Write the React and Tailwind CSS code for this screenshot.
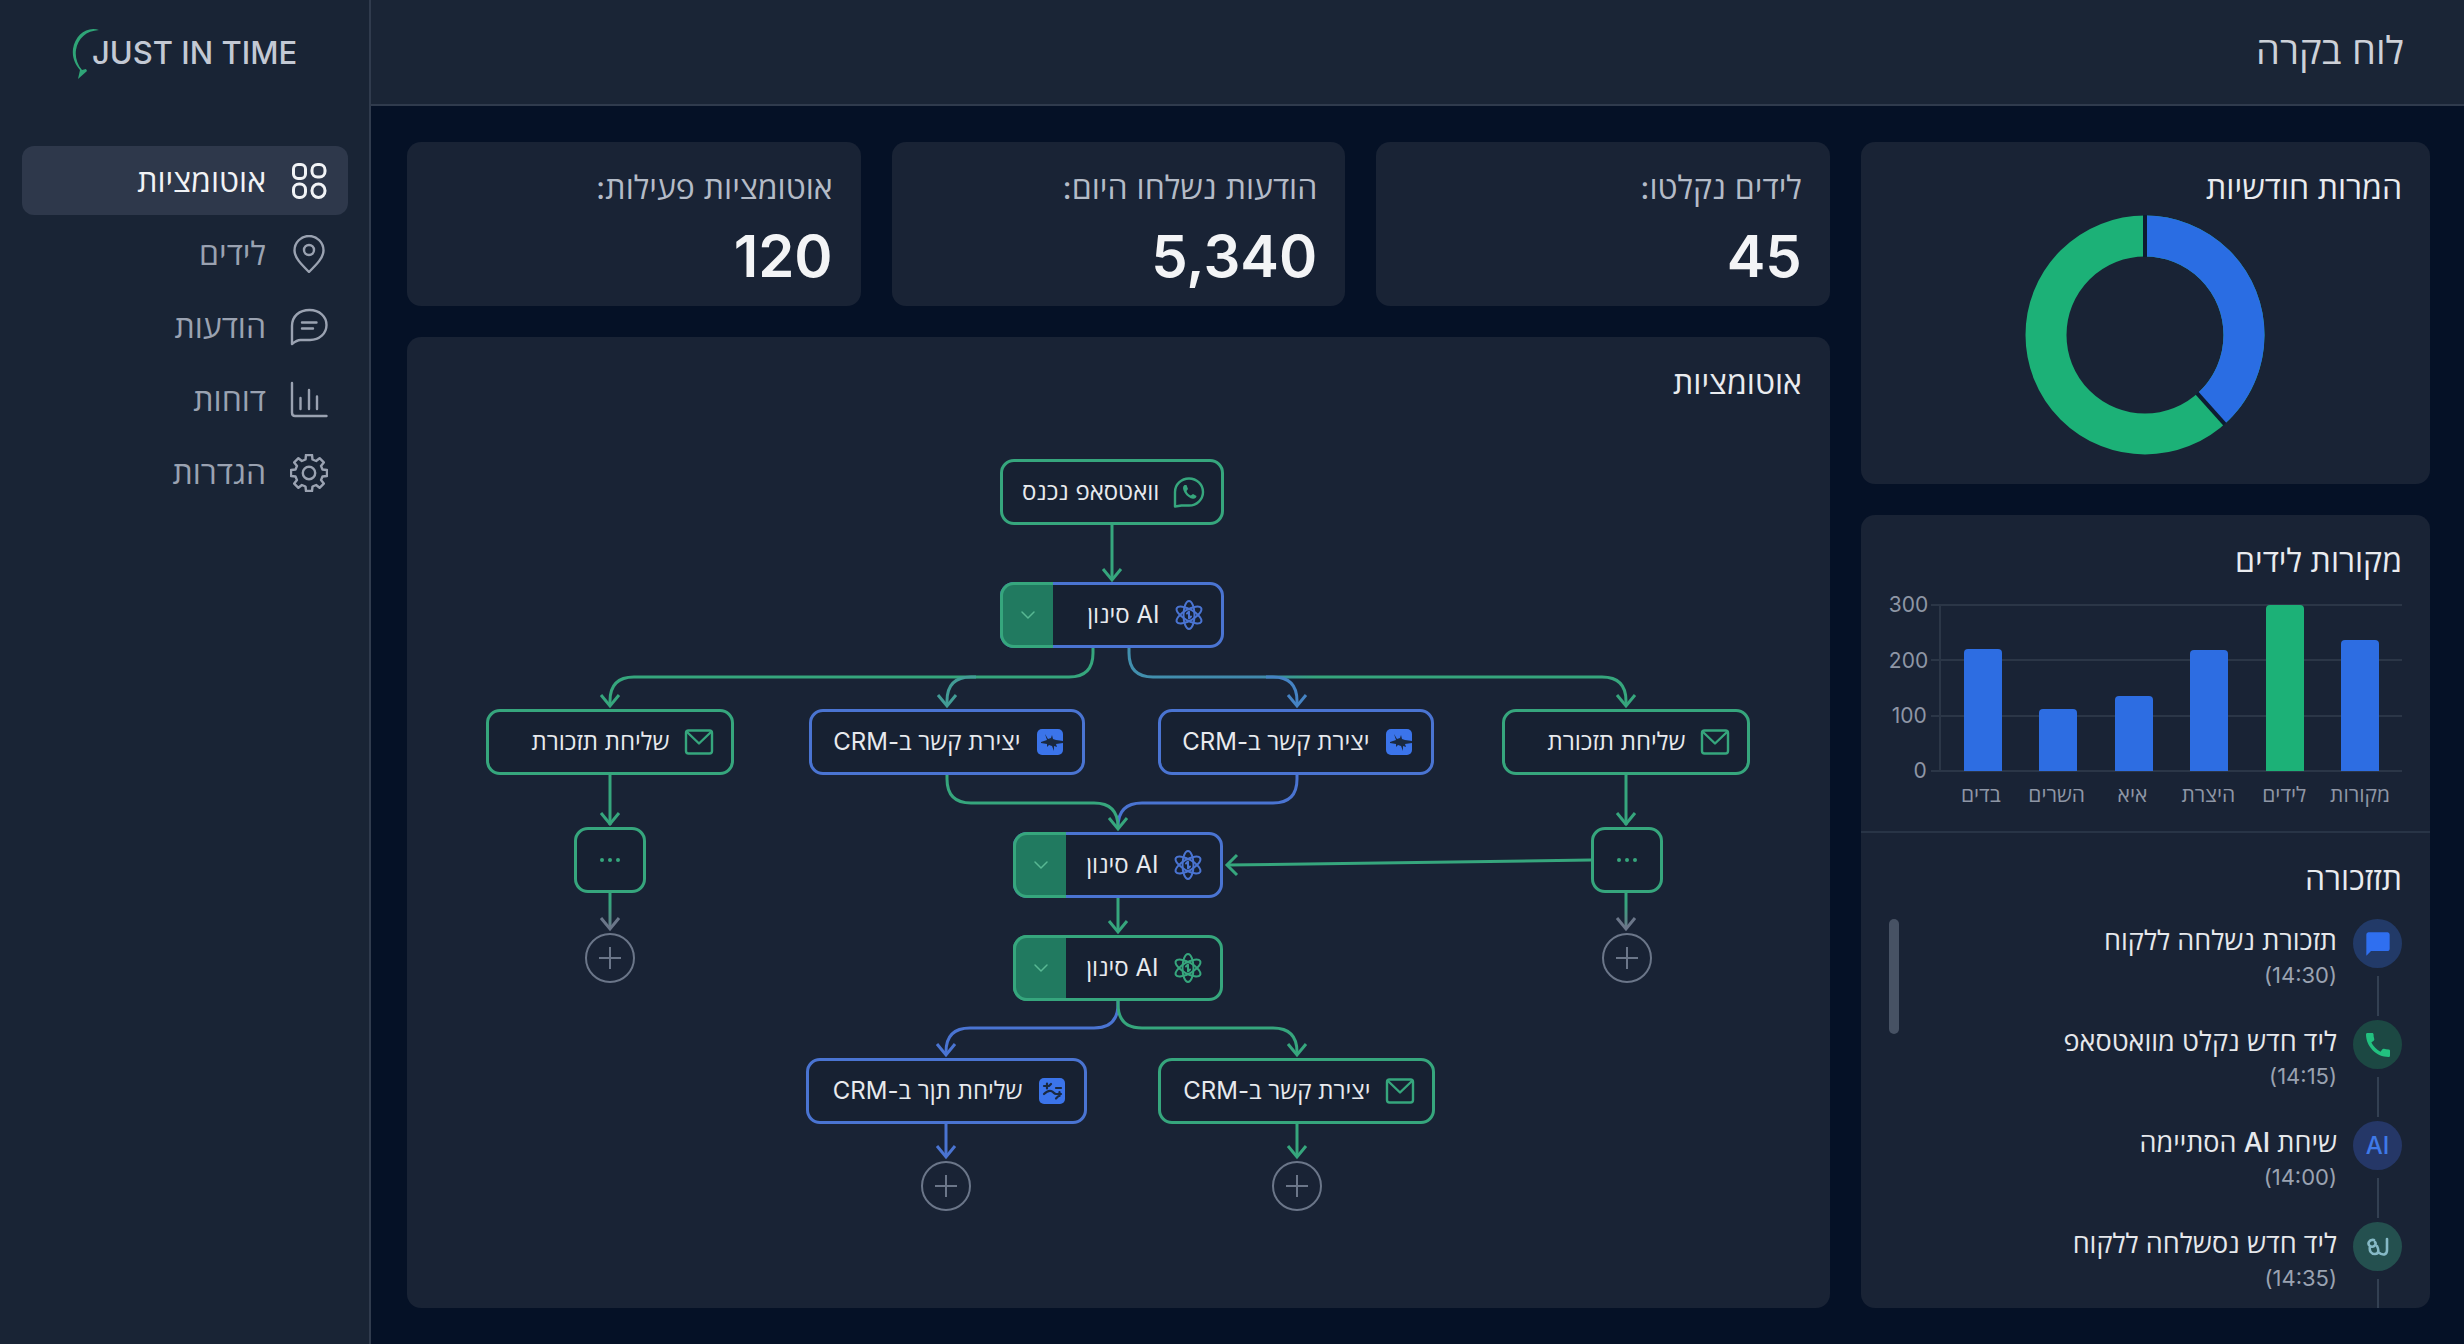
import React from "react";
import { ChevronDown } from "lucide-react";
import { MdCall, MdChatBubble } from "react-icons/md";

const GREEN = "#36a67d";
const BLUE = "#4a74d2";
const GREY = "#6b7689";

/* ---------- icons ---------- */

function GridIcon() {
  return (
    <svg viewBox="0 0 38 38" className="size-[38px]" fill="none" stroke="currentColor" strokeWidth="3">
      <rect x="3.5" y="2.5" width="12" height="14" rx="4.5" />
      <rect x="22" y="2.5" width="13" height="12.5" rx="5.5" />
      <rect x="3.5" y="22" width="12" height="13.5" rx="5.5" />
      <rect x="22" y="22" width="13" height="13.5" rx="6.5" />
    </svg>
  );
}

function PinIcon() {
  return (
    <svg viewBox="0 0 38 38" className="size-[38px]" fill="none" stroke="currentColor" strokeWidth="2.4" strokeLinejoin="round">
      <path d="M19 37C11 29 4.500 22.500 4.500 15.500a14.500 14.500 0 0 1 29 0C33.500 22.500 27 29 19 37Z" />
      <circle cx="19" cy="15" r="5" />
    </svg>
  );
}

function ChatIcon() {
  return (
    <svg viewBox="0 0 38 38" className="size-[38px]" fill="none" stroke="currentColor" strokeWidth="2.4" strokeLinecap="round" strokeLinejoin="round">
      <path d="M2 36V18C2 8 9.500 2 19.500 2S36.500 8.500 36.500 17 29.500 32 20 32H10.500C7.500 32 4.500 34 2 36Z" />
      <path d="M12 14.500h14.500M12 20.500h11" />
    </svg>
  );
}

function ReportIcon() {
  return (
    <svg viewBox="0 0 38 38" className="size-[38px]" fill="none" stroke="currentColor" strokeWidth="2.4" strokeLinecap="round" strokeLinejoin="round">
      <path d="M2 2v29.500Q2 35 5 35h31.500" />
      <path d="M10.500 17v11M19 9v19M27 15.500V28" />
    </svg>
  );
}

function GearIcon() {
  return (
    <svg viewBox="0 0 38 38" className="size-[38px]" fill="none" stroke="currentColor" strokeWidth="2.4" strokeLinejoin="round">
      <path d="M15.500 5.500 16 1h6l.500 4.500 3.600 1.500 3.500-2.800 4.200 4.200-2.800 3.500 1.500 3.600 4.500.500v6l-4.500.500-1.500 3.600 2.800 3.500-4.200 4.200-3.500-2.800-3.600 1.500-.500 4.500h-6l-.500-4.500-3.600-1.500-3.500 2.800-4.200-4.200 2.800-3.500-1.500-3.600L1 22v-6l4.500-.500L7 11.900 4.200 8.400l4.200-4.200L11.900 7Z" />
      <circle cx="19" cy="19" r="6.2" />
    </svg>
  );
}

function WhatsappIcon() {
  return (
    <svg viewBox="0 0 32 32" className="size-8" fill="none" stroke="currentColor" strokeWidth="2.4" strokeLinejoin="round">
      <path d="M2 30.500V16A14 13.500 0 1 1 16 29.500H8.500Z" />
      <path
        d="M11.500 9c-2 1.500-2 4 0 7.500s5.500 6 8.500 6.200c2 .1 3.500-1.200 3.500-2.700l-3.500-2-2.200 1.600c-2-.8-3.600-2.600-4.300-4.600l1.500-2L13.500 9Z"
        fill="currentColor"
        stroke="none"
      />
    </svg>
  );
}

function AtomIcon() {
  return (
    <svg viewBox="0 0 32 32" className="size-8" fill="none" stroke="currentColor" strokeWidth="2">
      {[0, 60, 120].map((angle) => (
        <ellipse key={angle} cx="16" cy="16" rx="5.5" ry="14" transform={`rotate(${angle} 16 16)`} />
      ))}
      <path d="M16 12.500v7M14 14.500l2-2M18 17.500l-2 2" strokeLinecap="round" />
    </svg>
  );
}

function CrmIcon() {
  return (
    <svg viewBox="0 0 32 32" className="size-8">
      <rect x="3" y="3" width="26" height="26" rx="5" fill="#3b74ea" />
      <path
        d="M11 8l3 5 3-1 1-3 1 4 3 1 7 1v2l-7 1 1 3-3-1v5l-2-5-3-1-2 2v-3l-6-1v-1l6-2Z"
        fill="#1a2940"
      />
    </svg>
  );
}

function CrmAltIcon() {
  return (
    <svg viewBox="0 0 32 32" className="size-8">
      <rect x="3" y="3" width="26" height="26" rx="5" fill="#3b74ea" />
      <g fill="none" stroke="#1a2940" strokeWidth="2.2" strokeLinecap="round" strokeLinejoin="round">
        <path d="M8 11h5l2-2M11 8.500v5M8 19c2-2 4-4 7-3s3 3 5 3h5" />
        <path d="M20 13h5M22 21.500l-2 2M23.500 17v4" />
      </g>
    </svg>
  );
}

function MailIcon() {
  return (
    <svg viewBox="0 0 32 32" className="size-8" fill="none" stroke="currentColor" strokeWidth="2.4" strokeLinejoin="round">
      <rect x="3" y="4.500" width="26" height="23" rx="2.500" />
      <path d="m4 6 12 11.500L28 6" />
    </svg>
  );
}

function SquiggleIcon() {
  return (
    <svg viewBox="0 0 24 24" className="size-6" fill="none" stroke="currentColor" strokeWidth="2.6" strokeLinecap="round">
      <path d="M8 5C3 4 1 9 4 11s7-1 5-4M4 11c-1 5 1 8 5 8s4-4 2-8M12 17c5 4 9 3 9-2V4" />
    </svg>
  );
}

/* ---------- data ---------- */

const navItems = [
  { label: "אוטומציות", icon: GridIcon, active: true },
  { label: "לידים", icon: PinIcon },
  { label: "הודעות", icon: ChatIcon },
  { label: "דוחות", icon: ReportIcon },
  { label: "הגדרות", icon: GearIcon },
];

const stats = [
  { label: "לידים נקלטו:", value: "45" },
  { label: "הודעות נשלחו היום:", value: "5,340" },
  { label: "אוטומציות פעילות:", value: "120" },
];

const sources = [
  { label: "בדים", value: 220 },
  { label: "השרים", value: 112 },
  { label: "איא", value: 136 },
  { label: "היצרת", value: 219 },
  { label: "לידים", value: 300, highlight: true },
  { label: "מקורות", value: 236 },
];

const activity = [
  { text: "תזכורת נשלחה ללקוח", time: "(14:30)", icon: <MdChatBubble className="size-7" />, tone: "bg-[#223a68] text-[#2f6ff0]" },
  { text: "ליד חדש נקלט מוואטסאפ", time: "(14:15)", icon: <MdCall className="size-8" />, tone: "bg-[#1c4843] text-[#22c07f]" },
  { text: "שיחת AI הסתיימה", time: "(14:00)", icon: "AI", tone: "bg-[#253767] text-[#3f7ae8]" },
  { text: "ליד חדש נסשלחה ללקוח", time: "(14:35)", icon: <SquiggleIcon />, tone: "bg-[#24504f] text-[#86b9c6]" },
];

const nodes = [
  { text: "וואטסאפ נכנס", icon: <WhatsappIcon />, tone: "green", place: "left-[514px] top-0 w-[224px]" },
  { text: "AI סינון", icon: <AtomIcon />, tone: "blue", toggle: true, place: "left-[514px] top-[123px] w-[224px]" },
  { text: "שליחת תזכורת", icon: <MailIcon />, tone: "green", place: "left-0 top-[250px] w-[248px]" },
  { text: "יצירת קשר ב-CRM", icon: <CrmIcon />, tone: "blue", place: "left-[323px] top-[250px] w-[276px]" },
  { text: "יצירת קשר ב-CRM", icon: <CrmIcon />, tone: "blue", place: "left-[672px] top-[250px] w-[276px]" },
  { text: "שליחת תזכורת", icon: <MailIcon />, tone: "green", place: "left-[1016px] top-[250px] w-[248px]" },
  { text: "AI סינון", icon: <AtomIcon />, tone: "blue", toggle: true, place: "left-[527px] top-[373px] w-[210px]" },
  { text: "AI סינון", icon: <AtomIcon />, tone: "green", toggle: true, place: "left-[527px] top-[476px] w-[210px]" },
  { text: "שליחת תןר ב-CRM", icon: <CrmAltIcon />, tone: "blue", place: "left-[320px] top-[599px] w-[281px]" },
  { text: "יצירת קשר ב-CRM", icon: <MailIcon />, tone: "green", place: "left-[672px] top-[599px] w-[277px]" },
];

const moreButtons = ["left-[88px] top-[368px]", "left-[1105px] top-[368px]"];

const plusButtons = [
  "left-[99px] top-[474px]",
  "left-[1116px] top-[474px]",
  "left-[435px] top-[702px]",
  "left-[786px] top-[702px]",
];

const edges = [
  { d: "M626 66V120", color: GREEN },
  { d: "M607 189V194Q607 218 583 218H148Q124 218 124 242V247", color: GREEN },
  { d: "M490 218H485Q461 218 461 242V247", color: "#429c96" },
  { d: "M643 189V194Q643 218 667 218H1116Q1140 218 1140 242V247", color: "url(#split)" },
  { d: "M780 218H787Q811 218 811 242V247", color: "#4583c4" },
  { d: "M124 316V366", color: GREEN },
  { d: "M1140 316V366", color: GREEN },
  { d: "M124 434V470", color: "url(#fade)" },
  { d: "M1140 434V470", color: "url(#fade)" },
  { d: "M811 316V320Q811 344 787 344H656Q632 344 632 368V370", color: BLUE },
  { d: "M461 316V320Q461 344 485 344H608Q632 344 632 368V370", color: GREEN },
  { d: "M1105 401L741 406", color: GREEN },
  { d: "M632 439V473", color: GREEN },
  { d: "M632 542V545Q632 569 608 569H484Q460 569 460 593V596", color: BLUE },
  { d: "M632 542V545Q632 569 656 569H787Q811 569 811 593V596", color: GREEN },
  { d: "M460 665V698", color: BLUE },
  { d: "M811 665V698", color: GREEN },
];

// tips of the arrow heads that point down
const arrowTips = [
  [626, 121, GREEN],
  [124, 247, GREEN],
  [461, 247, "#429c96"],
  [811, 247, "#4583c4"],
  [1140, 247, GREEN],
  [124, 365, GREEN],
  [1140, 365, GREEN],
  [124, 470, GREY],
  [1140, 470, GREY],
  [632, 370, GREEN],
  [632, 473, GREEN],
  [460, 596, BLUE],
  [811, 596, GREEN],
  [460, 698, BLUE],
  [811, 698, GREEN],
];

/* ---------- parts ---------- */

function Sidebar() {
  return (
    <aside className="w-[371px] shrink-0 border-r-2 border-[#303b4d] bg-[#192435]">
      <div className="flex h-[106px] items-center pl-[72px]">
        <svg viewBox="0 0 28 52" className="-mr-2 h-[52px] w-7" fill="#2fa577">
          <path d="M27 3C15 -1 3 8 1 22c-1 9 2 15 7 21l-2 9 9-8-1-2-4 1C5 37 3 30 4 23 6 11 14 4 27 3Z" />
        </svg>
        <span className="text-[31px] font-medium text-[#c3c9d4]">JUST IN TIME</span>
      </div>
      <nav dir="rtl" className="mt-10 flex flex-col gap-1 pr-[21px] pl-[22px]">
        {navItems.map(({ label, icon: Icon, active }) => (
          <a
            key={label}
            href="#"
            className={`flex h-[69px] items-center gap-6 rounded-xl px-5 text-[32px] ${
              active ? "bg-[#2e384b] text-[#f1f3f6]" : "text-[#9aa2b1]"
            }`}
          >
            <Icon />
            {label}
          </a>
        ))}
      </nav>
    </aside>
  );
}

function StatCard({ label, value }) {
  return (
    <div className="h-[164px] rounded-[14px] bg-[#192335] px-7 pt-[22px]">
      <p className="text-[32px] leading-12 text-[#b4bbc7]">{label}</p>
      <p className="pt-2 text-[58px] leading-[72px] font-semibold text-[#f3f4f6]">{value}</p>
    </div>
  );
}

function FlowNode({ text, icon, tone, toggle, place }) {
  const green = tone === "green";
  return (
    <div
      className={`absolute flex h-[66px] items-center gap-[14px] rounded-[14px] border-3 bg-[#172132] pr-4 text-2xl text-[#e8eaee] ${place} ${
        green ? "border-[#36a67d]" : "border-[#4a74d2]"
      }`}
    >
      <span className={green ? "text-[#36a67d]" : "text-[#4a74d2]"}>{icon}</span>
      <span className="whitespace-nowrap">{text}</span>
      {toggle && (
        <button
          type="button"
          aria-label="פתח"
          className="absolute -inset-y-[3px] -left-[3px] flex w-[53px] items-center justify-center rounded-l-[14px] border-3 border-r-0 border-[#36a67d] bg-[#217a60] text-[#58b893]"
        >
          <ChevronDown className="size-6" strokeWidth={1.5} />
        </button>
      )}
    </div>
  );
}

function FlowCanvas() {
  return (
    <div className="relative mx-auto h-[752px] w-[1264px]">
      <svg viewBox="0 0 1264 752" className="absolute inset-0 size-full" fill="none" strokeWidth="3">
        <defs>
          <linearGradient id="split" gradientUnits="userSpaceOnUse" x1="643" y1="0" x2="830" y2="0">
            <stop offset="0" stopColor="#4290ae" />
            <stop offset="0.7" stopColor="#4188ac" />
            <stop offset="1" stopColor={GREEN} />
          </linearGradient>
          <linearGradient id="fade" gradientUnits="userSpaceOnUse" x1="0" y1="434" x2="0" y2="470">
            <stop offset="0.3" stopColor={GREEN} />
            <stop offset="1" stopColor={GREY} />
          </linearGradient>
        </defs>
        {edges.map(({ d, color }) => (
          <path key={d + color} d={d} stroke={color} />
        ))}
        {arrowTips.map(([x, y, color]) => (
          <path key={`${x}-${y}`} d={`M${x - 9} ${y - 11}L${x} ${y}L${x + 9} ${y - 11}`} stroke={color} />
        ))}
        <path d="M751 396L741 406L751 416" stroke={GREEN} />
      </svg>

      {nodes.map((node) => (
        <FlowNode key={node.place} {...node} />
      ))}

      {moreButtons.map((place) => (
        <button
          key={place}
          type="button"
          aria-label="עוד"
          className={`absolute flex h-[66px] w-[72px] items-center justify-center gap-1 rounded-[14px] border-3 border-[#36a67d] bg-[#172132] ${place}`}
        >
          <span className="size-1 rounded-full bg-[#36a67d]" />
          <span className="size-1 rounded-full bg-[#36a67d]" />
          <span className="size-1 rounded-full bg-[#36a67d]" />
        </button>
      ))}

      {plusButtons.map((place) => (
        <button
          key={place}
          type="button"
          aria-label="הוסף"
          className={`absolute flex size-[50px] items-center justify-center rounded-full border-2 border-[#6b7689] text-[#6b7689] ${place}`}
        >
          <svg viewBox="0 0 22 22" className="size-[22px]" stroke="currentColor" strokeWidth="2">
            <path d="M11 0v22M0 11h22" />
          </svg>
        </button>
      ))}
    </div>
  );
}

function Donut() {
  const r = 99;
  const length = 2 * Math.PI * r;
  const blue = length * 0.384;
  return (
    <svg viewBox="0 0 240 240" className="mx-auto size-60" fill="none">
      <g transform="rotate(-90 120 120)" strokeWidth="41">
        <circle cx="120" cy="120" r={r} stroke="#1cb177" />
        <circle cx="120" cy="120" r={r} stroke="#2a6de3" strokeDasharray={`${blue} ${length}`} />
      </g>
      <g stroke="#0d1c31" strokeWidth="4">
        <path d="M120 0V42" />
        <path d="M120 0V42" transform="rotate(138.2 120 120)" />
      </g>
    </svg>
  );
}

function SourcesChart() {
  return (
    <div dir="ltr" className="px-7">
      <div className="relative flex h-[190px] flex-col justify-between">
        {[300, 200, 100, 0].map((tick) => (
          <div key={tick} className="flex h-6 items-center gap-1">
            <span className="w-[38px] text-right text-[21px] text-[#8e96a5]">{tick}</span>
            <span className="h-[2px] flex-1 bg-[#2b3647]" />
          </div>
        ))}
        <div className="absolute inset-y-3 right-0 left-[50px] flex items-end justify-around border-l-2 border-[#2b3647] px-1">
          {sources.map(({ label, value, highlight }) => (
            <div
              key={label}
              className={`w-[38px] rounded-t-[4px] ${highlight ? "bg-[#1cb177]" : "bg-[#2d6de2]"}`}
              style={{ height: `${value / 3}%` }}
            />
          ))}
        </div>
      </div>
      <div className="ml-[50px] grid grid-cols-6 px-1 text-center text-[21px] leading-6 text-[#8e96a5]">
        {sources.map(({ label }) => (
          <span key={label}>{label}</span>
        ))}
      </div>
    </div>
  );
}

function ActivityList() {
  return (
    <div className="flex flex-1 items-start justify-between px-7">
      <ul className="flex flex-col self-stretch">
        {activity.map(({ text, time, icon, tone }) => (
          <li key={time} className="group flex h-[101px] gap-4 last:h-auto last:flex-1">
            <div className="flex flex-col items-center">
              <span className={`flex size-[49px] shrink-0 items-center justify-center rounded-full text-2xl font-medium ${tone}`}>
                {icon}
              </span>
              <span className="mt-2 mb-1 w-[2px] flex-1 bg-[#334052] group-last:mb-0" />
            </div>
            <div>
              <p className="text-[27px] leading-11 font-medium text-[#e6e8ec]">{text}</p>
              <p className="text-[22px] leading-6 text-[#9aa2b1]">{time}</p>
            </div>
          </li>
        ))}
      </ul>
      <div className="h-[115px] w-[10px] rounded-full bg-[#475264]" />
    </div>
  );
}

function CardTitle({ children }) {
  return <h2 className="px-7 text-[32px] leading-12 font-medium text-[#e9ebef]">{children}</h2>;
}

export default function App() {
  return (
    <div className="flex min-h-screen bg-[#051126] font-['Inter','Open_Sans','Noto_Sans',sans-serif]">
      <Sidebar />
      <div className="flex min-w-0 flex-1 flex-col">
        <header dir="rtl" className="flex h-[106px] items-center border-b-2 border-[#303b4d] bg-[#1a2536] px-[60px] pb-1">
          <h1 className="text-[38px] text-[#cdd1d8]">לוח בקרה</h1>
        </header>

        <main className="grid flex-1 grid-cols-[5fr_2fr] gap-[31px] py-9 pr-[34px] pl-9">
          <div dir="rtl" className="flex min-w-0 flex-col gap-[31px]">
            <div className="grid grid-cols-3 gap-[31px]">
              {stats.map((stat) => (
                <StatCard key={stat.label} {...stat} />
              ))}
            </div>
            <section className="flex-1 rounded-[14px] bg-[#192335] pt-[22px]">
              <CardTitle>אוטומציות</CardTitle>
              <div className="pt-[52px]">
                <FlowCanvas />
              </div>
            </section>
          </div>

          <div dir="rtl" className="flex min-w-0 flex-col gap-[31px]">
            <section className="h-[342px] rounded-[14px] bg-[#192335] pt-[22px]">
              <CardTitle>המרות חודשיות</CardTitle>
              <div className="pt-[3px]">
                <Donut />
              </div>
            </section>
            <section className="flex flex-1 flex-col rounded-[14px] bg-[#192335]">
              <div className="h-[318px] border-b-2 border-[#283446] pt-[22px]">
                <CardTitle>מקורות לידים</CardTitle>
                <div className="pt-2">
                  <SourcesChart />
                </div>
              </div>
              <div className="flex flex-1 flex-col pt-[22px]">
                <CardTitle>תזזכורה</CardTitle>
                <div className="flex flex-1 flex-col pt-4">
                  <ActivityList />
                </div>
              </div>
            </section>
          </div>
        </main>
      </div>
    </div>
  );
}
